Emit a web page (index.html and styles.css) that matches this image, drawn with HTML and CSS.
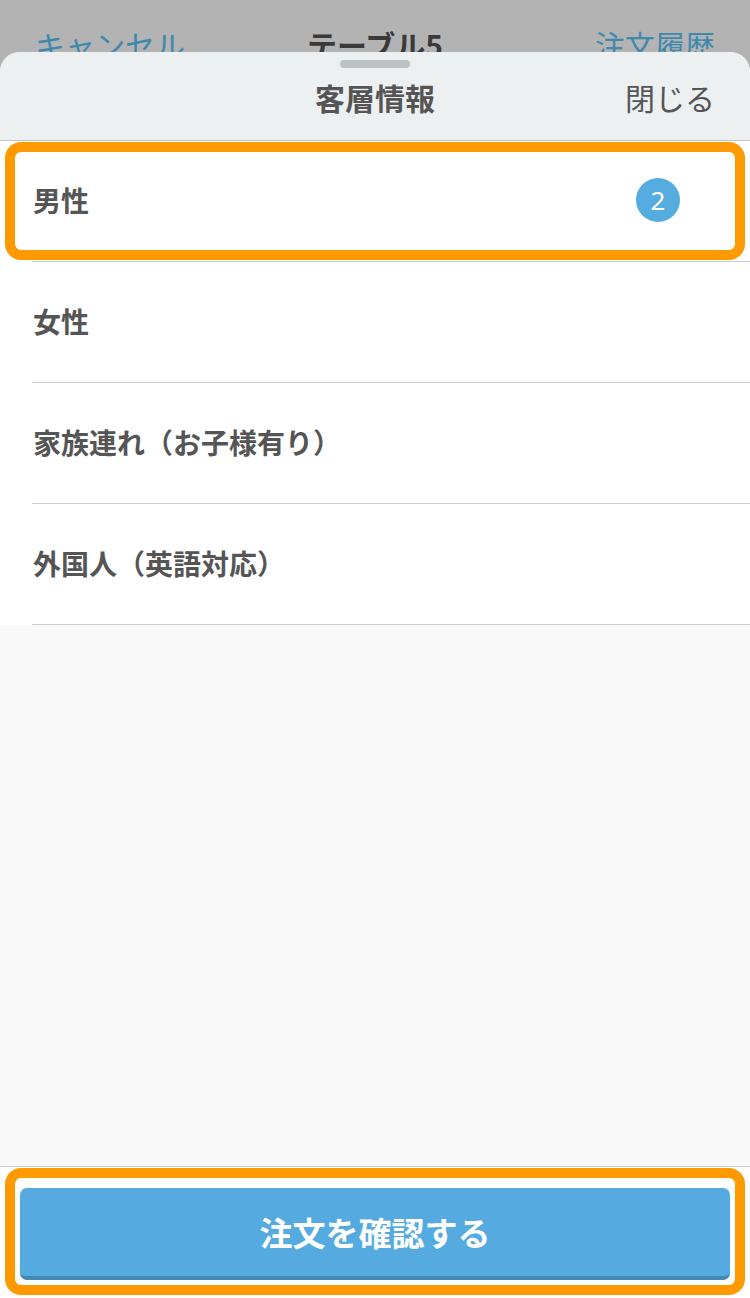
FILE: index.html
```html
<!DOCTYPE html>
<html lang="ja">
<head>
<meta charset="utf-8">
<link rel="stylesheet" href="styles.css">
</head>
<body>
<div class="screen">
  <div class="behind">
    <span class="behind-link">キャンセル</span>
    <span class="behind-title">テーブル5</span>
    <span class="behind-link right">注文履歴</span>
  </div>
  <div class="sheet">
    <div class="sheet-header">
      <div class="handle"></div>
      <div class="header-row">
        <span></span>
        <span class="sheet-title">客層情報</span>
        <span class="close">閉じる</span>
      </div>
    </div>
    <ul class="list">
      <li class="row"><span class="label">男性</span><span class="badge">2</span></li>
      <li class="row"><span class="label">女性</span></li>
      <li class="row"><span class="label">家族連れ（お子様有り）</span></li>
      <li class="row"><span class="label">外国人（英語対応）</span></li>
    </ul>
    <div class="spacer"></div>
    <div class="footer">
      <button class="confirm">注文を確認する</button>
    </div>
  </div>
  <div class="highlight highlight-row"></div>
  <div class="highlight highlight-button"></div>
</div>
</body>
</html>
```
FILE: styles.css
```css
* { box-sizing: border-box; }
html, body { margin: 0; padding: 0; }
body {
  font-family: "Noto Sans CJK JP", "Noto Sans", sans-serif;
  background: #b3b3b3;
  color: #555;
}
.screen {
  position: relative;
  width: 750px;
  height: 1298px;
  overflow: hidden;
  display: flex;
  flex-direction: column;
}
.behind {
  height: 52px;
  flex: none;
  overflow: hidden;
  display: grid;
  grid-template-columns: 1fr auto 1fr;
  align-items: start;
  padding: 26px 35px 0 35px;
  font-size: 30px;
  line-height: 36px;
}
.behind-link { color: #3f88ae; }
.behind-link.right { justify-self: end; }
.behind-title { color: #3a3a3a; font-weight: bold; }
.sheet {
  flex: 1;
  display: flex;
  flex-direction: column;
  background: #f9f9f9;
  border-radius: 20px 20px 0 0;
  overflow: hidden;
}
.sheet-header {
  height: 89px;
  flex: none;
  background: #ecf0f1;
  border-bottom: 1px solid #c4c4c4;
  display: flex;
  flex-direction: column;
  align-items: center;
  padding-top: 8px;
}
.handle {
  width: 70px;
  height: 8px;
  border-radius: 4px;
  background: #bcc1c4;
}
.header-row {
  width: 100%;
  display: grid;
  grid-template-columns: 1fr auto 1fr;
  align-items: center;
  padding: 0 35px;
  margin-top: 4px;
  height: 50px;
}
.sheet-title {
  font-size: 30px;
  font-weight: bold;
  color: #555;
}
.close {
  justify-self: end;
  font-size: 30px;
  color: #555;
}
.list {
  list-style: none;
  margin: 0;
  padding: 0;
  background: #fff;
  flex: none;
}
.row {
  height: 121px;
  margin-left: 32px;
  border-bottom: 1px solid #cfcfcf;
  display: flex;
  align-items: center;
  justify-content: space-between;
  padding-right: 70px;
  padding-bottom: 2px;
}
.label {
  font-size: 28px;
  font-weight: bold;
  color: #555;
  margin-left: 1px;
}
.badge {
  width: 44px;
  height: 44px;
  border-radius: 50%;
  background: #55acdf;
  color: #fff;
  font-family: "Noto Sans", sans-serif;
  font-size: 26px;
  display: flex;
  align-items: center;
  justify-content: center;
  line-height: 1;
}
.spacer { flex: 1; }
.footer {
  flex: none;
  height: 132px;
  background: #fff;
  border-top: 1px solid #cccccc;
  padding: 21px 20px 18px 20px;
}
.confirm {
  width: 100%;
  height: 92px;
  border: none;
  border-bottom: 4px solid #4487b0;
  border-radius: 7px;
  background: #55abe0;
  color: #fff;
  font-family: "Noto Sans CJK JP", sans-serif;
  font-size: 33px;
  font-weight: bold;
  padding: 0;
}
.highlight {
  position: absolute;
  left: 5px;
  width: 740px;
  border: 10px solid #ff9900;
  border-radius: 16px;
  pointer-events: none;
}
.highlight-row { top: 142px; height: 118px; }
.highlight-button { top: 1168px; height: 127px; }
```
